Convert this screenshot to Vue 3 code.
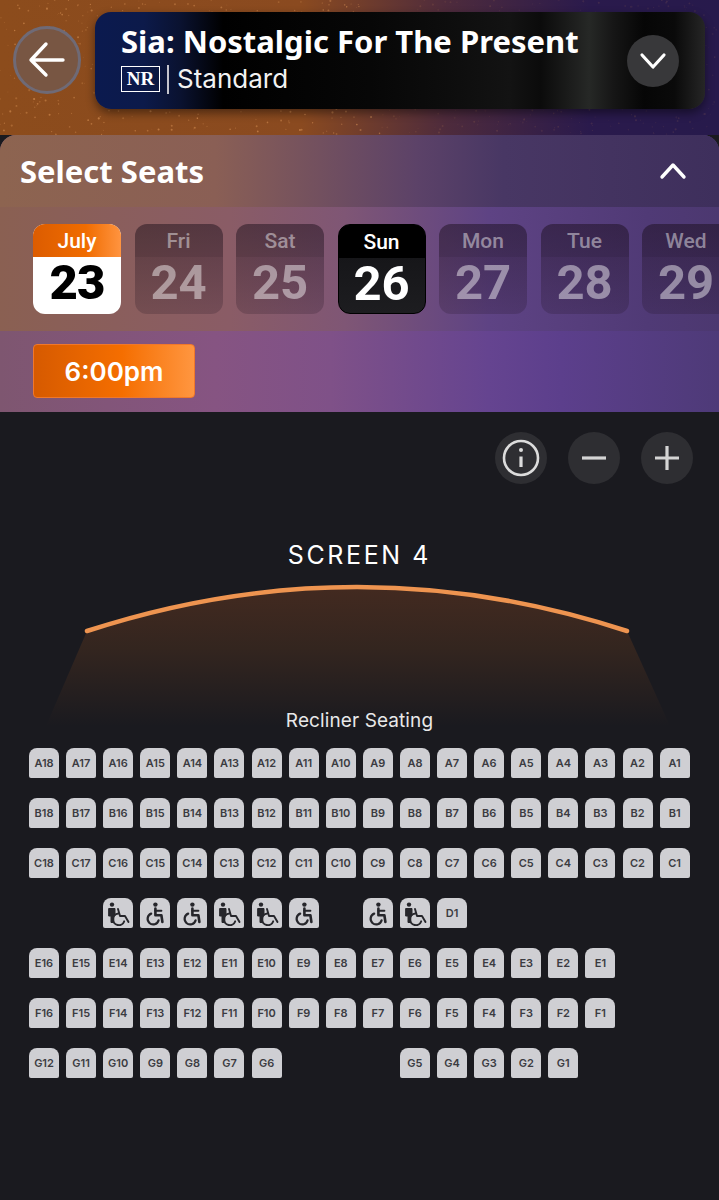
<script setup>
const days = [
  { top: 'July', num: 23, kind: 'today' },
  { top: 'Fri', num: 24, kind: 'warm' },
  { top: 'Sat', num: 25, kind: 'warm' },
  { top: 'Sun', num: 26, kind: 'picked' },
  { top: 'Mon', num: 27, kind: 'cool' },
  { top: 'Tue', num: 28, kind: 'cool' },
  { top: 'Wed', num: 29, kind: 'cool' }
]

// a row is a list of 18 column slots: null leaves a hole
function range(letter, from, to) {
  const out = []
  for (let n = from; n >= to; n--) out.push({ label: letter + n })
  return out
}
function holes(n) {
  return Array(n).fill(null)
}

const rows = [
  range('A', 18, 1),
  range('B', 18, 1),
  range('C', 18, 1),
  [
    ...holes(2),
    { icon: 'companion' }, { icon: 'chair' }, { icon: 'chair' },
    { icon: 'companion' }, { icon: 'companion' }, { icon: 'chair' },
    null,
    { icon: 'chair' }, { icon: 'companion' }, { label: 'D1' }
  ],
  range('E', 16, 1),
  range('F', 16, 1),
  [...range('G', 12, 6), ...holes(3), ...range('G', 5, 1)]
]

// seeded so the speckle is the same on every load
let seed = 7
function rnd() {
  seed = (seed * 16807) % 2147483647
  return seed / 2147483647
}
const specks = []
for (let i = 0; i < 900; i++) {
  const x = rnd() * 719
  specks.push({
    x,
    y: rnd() * 135,
    r: 0.4 + rnd() * 0.7,
    o: (x < 380 ? 0.55 : 0.14) * (0.4 + rnd() * 0.6)
  })
}
</script>

<template>
  <div class="page">
    <header class="hero">
      <svg class="specks" width="719" height="135" aria-hidden="true">
        <circle v-for="(s, i) in specks" :key="i" :cx="s.x" :cy="s.y" :r="s.r" fill="#e8a060" :opacity="s.o" />
      </svg>
      <button class="back">
        <svg width="38" height="38" viewBox="0 0 38 38" fill="none" stroke="#fff" stroke-width="3.4" stroke-linecap="round" stroke-linejoin="round">
          <path d="M3 19H35M18 3 3 19 18 34" />
        </svg>
      </button>
      <div class="movie">
        <div class="movie-text">
          <h1 class="movie-title">Sia: Nostalgic For The Present</h1>
          <div class="movie-meta">
            <span class="rating">NR</span>
            <span class="divider"></span>
            <span class="format">Standard</span>
          </div>
        </div>
        <span class="expand">
          <svg width="28" height="18" viewBox="0 0 28 18" fill="none" stroke="#fff" stroke-width="3.2" stroke-linecap="round" stroke-linejoin="round">
            <path d="M3 3 14 15 25 3" />
          </svg>
        </span>
      </div>
    </header>

    <section class="panel">
      <div class="panel-head">
        <h2 class="panel-title">Select Seats</h2>
        <svg width="28" height="18" viewBox="0 0 28 18" fill="none" stroke="#fff" stroke-width="3.4" stroke-linecap="round" stroke-linejoin="round">
          <path d="M3 15 14 3 25 15" />
        </svg>
      </div>
      <div class="dates">
        <div v-for="d in days" :key="d.num" class="day" :class="'day--' + d.kind">
          <div class="day-top">{{ d.top }}</div>
          <div class="day-num">{{ d.num }}</div>
        </div>
      </div>
      <div class="times">
        <button class="time">6:00pm</button>
      </div>
    </section>

    <main class="map">
      <div class="tools">
        <span class="tool">
          <svg width="38" height="38" viewBox="0 0 38 38" fill="none" stroke="#dcdcdc" stroke-width="2.6" stroke-linecap="round">
            <circle cx="19" cy="19" r="17" />
            <path d="M19 17.5V28" stroke-width="3.2" stroke-linecap="butt" />
            <circle cx="19" cy="11" r="2" fill="#dcdcdc" stroke="none" />
          </svg>
        </span>
        <span class="tool">
          <svg width="28" height="28" viewBox="0 0 28 28" stroke="#d4d4d4" stroke-width="3.2"><path d="M2 14H26" /></svg>
        </span>
        <span class="tool">
          <svg width="28" height="28" viewBox="0 0 28 28" stroke="#d4d4d4" stroke-width="3.2"><path d="M2 14H26M14 2V26" /></svg>
        </span>
      </div>

      <div class="screen">
        <div class="screen-name">SCREEN 4</div>
        <svg class="screen-art" width="719" height="150" viewBox="0 0 719 150" aria-hidden="true">
          <defs>
            <linearGradient id="beam" x1="0" y1="0" x2="0" y2="1">
              <stop offset="0" stop-color="#432a20" />
              <stop offset="0.45" stop-color="#33251f" />
              <stop offset="1" stop-color="#1a1a1f" />
            </linearGradient>
          </defs>
          <path d="M87 53Q357 -35 627 53L670 148H46Z" fill="url(#beam)" />
          <path d="M87 53Q357 -35 627 53" fill="none" stroke="#ee9450" stroke-width="4.5" stroke-linecap="round" />
        </svg>
        <div class="section-name">Recliner Seating</div>
      </div>

      <div class="seats">
        <div v-for="(row, r) in rows" :key="r" class="seat-row">
          <template v-for="(seat, c) in row" :key="c">
            <span v-if="!seat" class="seat-hole"></span>
            <span v-else class="seat">
              <template v-if="seat.label">{{ seat.label }}</template>
              <svg v-else-if="seat.icon === 'companion'" width="30" height="30" viewBox="0 0 30 30" fill="none" stroke="#26262b" stroke-width="1.9" stroke-linecap="round" stroke-linejoin="round">
                <circle cx="9" cy="6.6" r="2.2" fill="#26262b" stroke="none" />
                <path d="M6 10.5h6v7.5h-1.2v6.5H8v-6.5H6z" fill="#26262b" stroke-width="1" />
                <path d="M15 11l2 7h5l3.5 6" />
                <path d="M15.2 15.5a5.8 5.8 0 1 0 6 7.8" />
              </svg>
              <svg v-else width="30" height="30" viewBox="0 0 30 30" fill="none" stroke="#26262b" stroke-width="2" stroke-linecap="round" stroke-linejoin="round">
                <circle cx="15.4" cy="6.6" r="2.2" fill="#26262b" stroke="none" />
                <path d="M15.4 10.5v6.8h6l1 6.7" stroke-width="2.6" />
                <path d="M15.4 12.8h6" />
                <path d="M11.2 15.6a5.6 5.6 0 1 0 7.4 6.8" stroke-width="2.2" />
              </svg>
            </span>
          </template>
        </div>
      </div>
    </main>
  </div>
</template>

<style scoped>
.page {
  width: 719px;
  height: 1200px;
  overflow: hidden;
  background: #1a1a1f;
  font-family: Inter, "Liberation Sans", sans-serif;
}

.hero {
  position: relative;
  height: 135px;
  box-sizing: border-box;
  padding: 12px 14px 0 13px;
  display: flex;
  align-items: flex-start;
  gap: 14px;
  background: linear-gradient(90deg, #8c4c1c 0%, #8a4a20 42%, #4e2b3c 62%, #2a1a4c 82%, #271a4c 100%);
}

.specks {
  position: absolute;
  left: 0;
  top: 0;
}

.back {
  position: relative;
  flex: none;
  width: 68px;
  height: 68px;
  margin-top: 14px;
  padding: 0;
  box-sizing: border-box;
  border: 3px solid #6f6a76;
  border-radius: 50%;
  background: #785643;
  display: flex;
  align-items: center;
  justify-content: center;
}

.movie {
  position: relative;
  flex: 1;
  height: 97px;
  box-sizing: border-box;
  padding: 0 26px 0 26px;
  border-radius: 16px;
  display: flex;
  align-items: center;
  justify-content: space-between;
  background: linear-gradient(90deg, #0b1a4f 0%, #0c1a4a 8%, #0a1230 14%, #000 21%, #070707 45%, #0d0d0d 58%, #131313 68%, #0b0b0b 73%, #1c1d1c 78%, #262826 81%, #161616 85%, #060606 90%, #0a0a0a 95%, #262626 100%);
  box-shadow: 0 4px 10px rgba(0, 0, 0, 0.45);
}

.movie-text {
  margin-top: -6px;
}

.movie-title {
  margin: 0;
  font-family: "Noto Sans", Lato, sans-serif;
  font-size: 31px;
  font-weight: 700;
  line-height: 40px;
  color: #fff;
  white-space: nowrap;
}

.movie-meta {
  display: flex;
  align-items: center;
  margin-top: 3px;
}

.rating {
  box-sizing: border-box;
  width: 39px;
  height: 26px;
  border: 1.5px solid #fff;
  font-family: "Liberation Serif", serif;
  font-size: 19px;
  font-weight: 700;
  line-height: 23px;
  text-align: center;
  color: #fff;
}

.divider {
  width: 2px;
  height: 29px;
  margin: 0 8px 0 7px;
  background: #c4c4cc;
}

.format {
  font-size: 26px;
  line-height: 30px;
  color: #f2f2f2;
}

.expand {
  flex: none;
  width: 52px;
  height: 52px;
  border-radius: 50%;
  background: #38383a;
  display: flex;
  align-items: center;
  justify-content: center;
}

.panel {
  height: 277px;
  border-radius: 16px 16px 0 0;
  background: linear-gradient(90deg, #7e5670 0%, #865482 30%, #7f5188 46%, #654490 68%, #5c3f8c 78%, #4e3a78 100%);
  overflow: hidden;
}

.panel-head {
  height: 72px;
  box-sizing: border-box;
  padding: 0 32px 0 20px;
  display: flex;
  align-items: center;
  justify-content: space-between;
  background: linear-gradient(90deg, #8d6450 0%, #8a5f55 30%, #5c4268 58%, #483764 70%, #3e2f5c 100%);
}

.panel-title {
  margin: 0;
  font-family: "Noto Sans", Lato, sans-serif;
  font-size: 31px;
  font-weight: 700;
  color: #fff;
}

.dates {
  height: 124px;
  box-sizing: border-box;
  padding: 17px 0 0 33px;
  display: flex;
  gap: 13.5px;
  overflow: hidden;
  background: linear-gradient(90deg, #8a6052 0%, #8a5c66 32%, #7f5675 48%, #5e4384 68%, #503a76 90%, #4c3870 100%);
}

.day {
  flex: none;
  width: 88px;
  height: 90px;
  border-radius: 12px;
  overflow: hidden;
  font-family: Roboto, "Liberation Sans", sans-serif;
  text-align: center;
  background: linear-gradient(180deg, rgba(28, 14, 28, 0.42) 0%, rgba(28, 14, 28, 0.2) 100%);
  color: rgba(255, 255, 255, 0.45);
}

.day-top {
  height: 33px;
  font-size: 21px;
  font-weight: 500;
  line-height: 35px;
  background: rgba(0, 0, 0, 0.08);
}

.day-num {
  height: 57px;
  font-size: 49px;
  font-weight: 700;
  line-height: 51px;
}

.day--today {
  color: #000;
  background: #fff;
}

.day--today .day-top {
  color: #fff;
  background: linear-gradient(90deg, #dc5c00 0%, #f06c00 60%, #ff9440 100%);
}

.day--today .day-num {
  font-weight: 900;
  letter-spacing: -1px;
}

.day--picked {
  color: #fff;
  background: linear-gradient(180deg, #121215 0%, #1d1d20 100%);
  box-sizing: border-box;
  border: 1px solid #000;
}

.day--picked .day-top {
  background: #000;
}

.times {
  height: 81px;
  box-sizing: border-box;
  padding: 13px 0 0 33px;
}

.time {
  display: block;
  width: 162px;
  height: 54px;
  padding: 0;
  box-sizing: border-box;
  border: 1px solid #f0782a;
  border-radius: 4px;
  background: linear-gradient(90deg, #d65a00 0%, #f56e00 55%, #ff9640 100%);
  font-family: Inter, "Liberation Sans", sans-serif;
  font-size: 26px;
  font-weight: 600;
  color: #fff;
}

.map {
  background: #1a1a1f;
}

.tools {
  padding: 20px 26px 0 0;
  display: flex;
  justify-content: flex-end;
  gap: 21px;
}

.tool {
  width: 52px;
  height: 52px;
  border-radius: 50%;
  background: #2e2e32;
  display: flex;
  align-items: center;
  justify-content: center;
}

.screen {
  position: relative;
  height: 264px;
}

.screen-name {
  position: absolute;
  left: 0;
  right: 0;
  top: 56px;
  text-align: center;
  font-size: 25px;
  line-height: 30px;
  letter-spacing: 2.6px;
  color: #fff;
}

.screen-art {
  position: absolute;
  left: 0;
  top: 94px;
}

.section-name {
  position: absolute;
  left: 0;
  right: 0;
  top: 225px;
  text-align: center;
  font-size: 19px;
  line-height: 24px;
  letter-spacing: 0.1px;
  color: #e8e8e8;
}

.seats {
  padding-left: 29px;
  display: flex;
  flex-direction: column;
  gap: 20px;
}

.seat-row {
  display: flex;
  gap: 7.1px;
}

.seat,
.seat-hole {
  flex: none;
  width: 30px;
  height: 30px;
}

.seat {
  border-radius: 8px 8px 2px 2px;
  background: #cfcfd3;
  color: #3b3b41;
  font-size: 11px;
  font-weight: 600;
  display: flex;
  align-items: center;
  justify-content: center;
}
</style>
